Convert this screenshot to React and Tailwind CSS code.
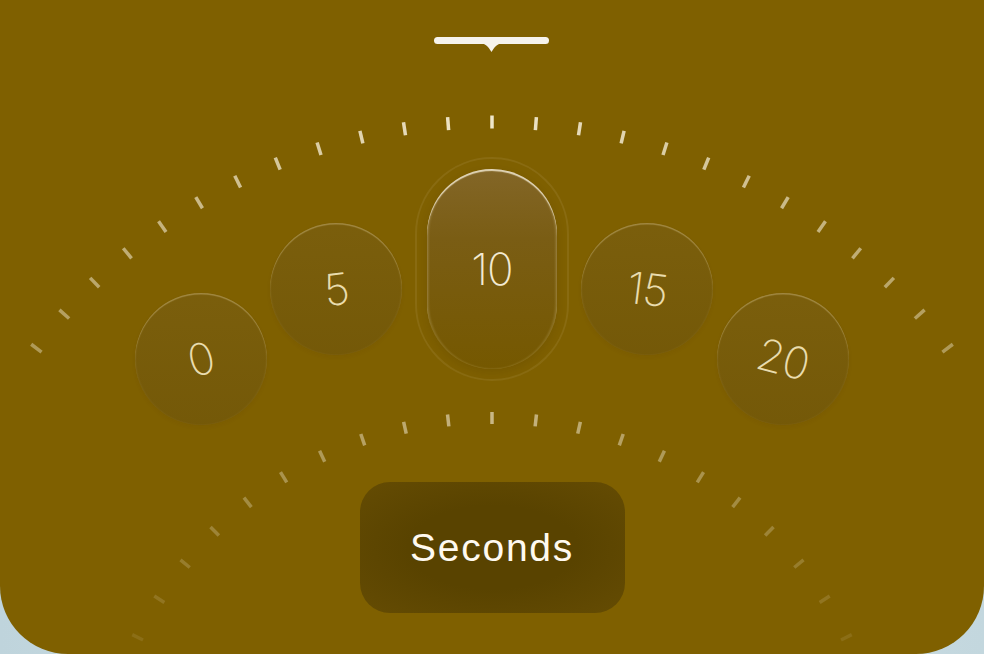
import React from 'react';

const OUTER = { cx: 492, cy: 694, r: 572, step: 4.4 };
const INNER = { cx: 492, cy: 814, r: 396, step: 6.35 };

function arcTicks(arc, count, len, opacityAt) {
  const ticks = [];
  for (let i = -count; i <= count; i++) {
    const a = (i * arc.step * Math.PI) / 180;
    const sin = Math.sin(a);
    const cos = Math.cos(a);
    const r1 = arc.r - len / 2;
    const r2 = arc.r + len / 2;
    ticks.push(
      <line
        key={i}
        x1={arc.cx + r1 * sin}
        y1={arc.cy - r1 * cos}
        x2={arc.cx + r2 * sin}
        y2={arc.cy - r2 * cos}
        stroke="#f6eed6"
        strokeWidth="3.5"
        strokeOpacity={Math.max(0, opacityAt(Math.abs(i)))}
      />
    );
  }
  return ticks;
}

const DIALS = [
  { label: '0', left: 135, top: 238, rot: -15 },
  { label: '5', left: 270, top: 168, rot: -7 },
  { label: '15', left: 581, top: 168, rot: 7 },
  { label: '20', left: 717, top: 238, rot: 15 },
];

function Handle() {
  return (
    <svg width="120" height="20" viewBox="0 0 120 20" className="mt-[35px] shrink-0">
      <rect x="2" y="2" width="115" height="7" rx="3.5" fill="#f6f3ec" />
      <path d="M46 8 C53 8 56 11 59.5 17 C63 11 66 8 73 8 Z" fill="#f6f3ec" />
    </svg>
  );
}

export default function App() {
  return (
    <div className="w-full h-[654px] bg-[linear-gradient(90deg,#bfd4dc,#d3e3e8_50%,#c3d7de)] overflow-hidden">
      <div className="relative h-full w-full bg-[#7f6000] rounded-b-[68px] overflow-hidden flex flex-col items-center">
        {/* tick arcs */}
        <svg className="absolute inset-0 pointer-events-none" width="984" height="654">
          {arcTicks(OUTER, 12, 13, (n) => 0.95 - 0.045 * n)}
          {arcTicks(INNER, 12, 12, (n) => 0.62 - 0.052 * n)}
        </svg>

        <Handle />

        {/* dial */}
        <div className="relative w-full h-[427px] shrink-0">
          {DIALS.map((d) => (
            <div
              key={d.label}
              className="absolute w-[132px] h-[132px] rounded-full bg-[linear-gradient(180deg,rgba(112,90,40,0.3),rgba(100,78,20,0.4))] shadow-[inset_0_1.5px_1px_rgba(255,240,200,0.28),inset_1px_0_2px_rgba(255,240,200,0.06),inset_-1px_0_2px_rgba(255,240,200,0.06),0_2px_4px_rgba(60,40,0,0.06)] flex items-center justify-center"
              style={{ left: d.left, top: d.top }}
            >
              <span
                className="font-['Inter','Noto_Sans',sans-serif] font-[250] text-[44px] leading-none text-[#e9dcae] tracking-[-0.02em]"
                style={{ transform: `rotate(${d.rot}deg)` }}
              >
                {d.label}
              </span>
            </div>
          ))}

          <div className="absolute left-[415px] top-[102px] w-[154px] h-[224px] rounded-full border-2 border-[rgba(255,245,215,0.08)] p-[10px]">
            <div className="w-full h-full rounded-full bg-[linear-gradient(180deg,#836627_0%,#7a5d14_35%,#755800_100%)] shadow-[inset_0_2px_1px_rgba(255,248,230,0.75),inset_2px_0_2px_rgba(255,240,200,0.14),inset_-2px_0_2px_rgba(255,240,200,0.14),0_4px_10px_rgba(50,35,0,0.12)] flex items-center justify-center">
              <span className="font-['Inter','Noto_Sans',sans-serif] font-[250] text-[44px] leading-none text-[#f3ead2] tracking-[-0.02em]">
                10
              </span>
            </div>
          </div>
        </div>

        {/* unit button */}
        <button className="w-[265px] h-[131px] shrink-0 rounded-[30px] bg-[radial-gradient(ellipse_at_center,#594300_45%,#654c03_100%)] flex items-center justify-center">
          <span className="font-['Liberation_Sans','Arial',sans-serif] text-[39px] leading-none text-[#fffaf0] tracking-[0.045em]">
            Seconds
          </span>
        </button>
      </div>
    </div>
  );
}
